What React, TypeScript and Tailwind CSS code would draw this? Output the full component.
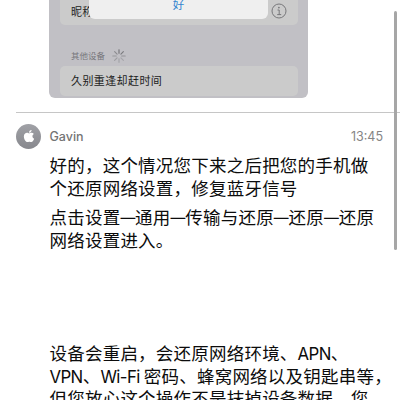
import { FaApple } from "react-icons/fa";

const paragraphs = [
  {
    className: "mt-[6px]",
    lines: ["好的，这个情况您下来之后把您的手机做", "个还原网络设置，修复蓝牙信号"],
  },
  {
    className: "mt-[6.5px]",
    lines: ["点击设置—通用—传输与还原—还原—还原", "网络设置进入。"],
  },
  {
    className: "mt-[90.5px]",
    lines: [
      "设备会重启，会还原网络环境、APN、",
      "VPN、Wi-Fi 密码、蜂窝网络以及钥匙串等，",
      "但您放心这个操作不是抹掉设备数据，您",
    ],
  },
];

const spokes = [
  { angle: 0, opacity: 0.9 },
  { angle: 45, opacity: 0.8 },
  { angle: 90, opacity: 0.5 },
  { angle: 135, opacity: 0.3 },
  { angle: 180, opacity: 0.35 },
  { angle: 225, opacity: 0.4 },
  { angle: 270, opacity: 0.45 },
  { angle: 315, opacity: 0.6 },
];

function Spinner() {
  return (
    <svg className="ml-[7px] size-[14px]" viewBox="0 0 14 14">
      {spokes.map((s) => (
        <line
          key={s.angle}
          x1="7"
          y1="0.8"
          x2="7"
          y2="4.3"
          stroke="#68686c"
          strokeWidth="1.1"
          strokeLinecap="round"
          opacity={s.opacity}
          transform={`rotate(${s.angle} 7 7)`}
        />
      ))}
    </svg>
  );
}

function InfoIcon() {
  return (
    <svg className="size-[16px]" viewBox="0 0 16 16" fill="none" stroke="#77777a">
      <circle cx="8" cy="8" r="7" strokeWidth="1" />
      <circle cx="7.9" cy="4.6" r="0.9" fill="#77777a" stroke="none" />
      <path d="M6.5 7h1.7v4.5M6.2 11.6h4" strokeWidth="1" />
    </svg>
  );
}

// dashes and latin words are set tighter than the Chinese text around them
function Line({ text }: { text: string }) {
  return (
    <p className="whitespace-nowrap">
      {text.split(/(—|[A-Za-z-]+ ?)/).map((part, i) => {
        if (part === "—") {
          return (
            <span key={i} className="relative -top-px text-[14.8px] tracking-[-0.1px]">
              {part}
            </span>
          );
        }
        if (/^[A-Za-z]/.test(part)) {
          return (
            <span key={i} className="text-[16.8px] tracking-[-0.6px]">
              {part}
            </span>
          );
        }
        return part;
      })}
    </p>
  );
}

function Attachment() {
  return (
    <div className="relative ml-[49px] h-[98px] w-[259px] overflow-hidden rounded-b-[6px] bg-[#c1c0c5] pr-[10px] pl-[11px]">
      <div className="flex h-[25px] items-start justify-between rounded-b-[5px] bg-[#cbcbcb] pr-[11px] pl-[11px]">
        <span className="mt-[4px] text-[11px] leading-[16px] tracking-[0.2px] text-[#222]">昵称</span>
        <div className="mt-[3px]">
          <InfoIcon />
        </div>
      </div>
      <div className="flex h-[41px] items-center pt-[20px] pl-[11px]">
        <span className="text-[8.5px] leading-[14px] text-[#77767b]">其他设备</span>
        <Spinner />
      </div>
      <div className="flex h-[30px] items-center rounded-[5px] bg-[#cbcbcb] pt-px pl-[11px] text-[11px] tracking-[0.4px] text-[#1c1c1c]">
        久别重逢却赶时间
      </div>
      {/* alert sheet over the list */}
      <div className="absolute top-0 left-[40px] flex h-[19px] w-[179px] justify-center rounded-b-[6px] bg-[#efefef]">
        <span className="-mt-[3px] text-[11.5px] leading-[16px] text-[#3586cf]">好</span>
      </div>
    </div>
  );
}

export default function App() {
  return (
    <div className="relative h-[400px] w-[400px] overflow-hidden bg-white font-['Inter','Noto_Sans_CJK_SC',sans-serif]">
      <Attachment />
      <div className="mt-[14px] ml-[16px] h-px bg-[#c6c6c6]" />
      <div className="mt-[11px] flex h-[25px] items-center pr-[17px] pl-[16px]">
        <div className="flex size-[25px] items-center justify-center rounded-full bg-linear-to-b from-[#a0a1a6] to-[#87888d]">
          <FaApple className="mb-px size-[14px] text-white" />
        </div>
        <span className="mt-[2px] ml-[8.5px] text-[12.5px] font-medium text-[#747474]">Gavin</span>
        <span className="mt-[2px] ml-auto text-[12.5px] text-[#858585]">13:45</span>
      </div>
      <div className="pl-[49.5px] text-[17.5px] leading-[22.5px] tracking-[0.22px] text-[#0c0c0c]">
        {paragraphs.map((p, i) => (
          <div key={i} className={p.className}>
            {p.lines.map((line) => (
              <Line key={line} text={line} />
            ))}
          </div>
        ))}
      </div>
      {/* scroll indicator */}
      <div className="absolute top-[11px] right-[3px] h-[239px] w-[3px] rounded-full bg-[#a6a6a6]" />
    </div>
  );
}
